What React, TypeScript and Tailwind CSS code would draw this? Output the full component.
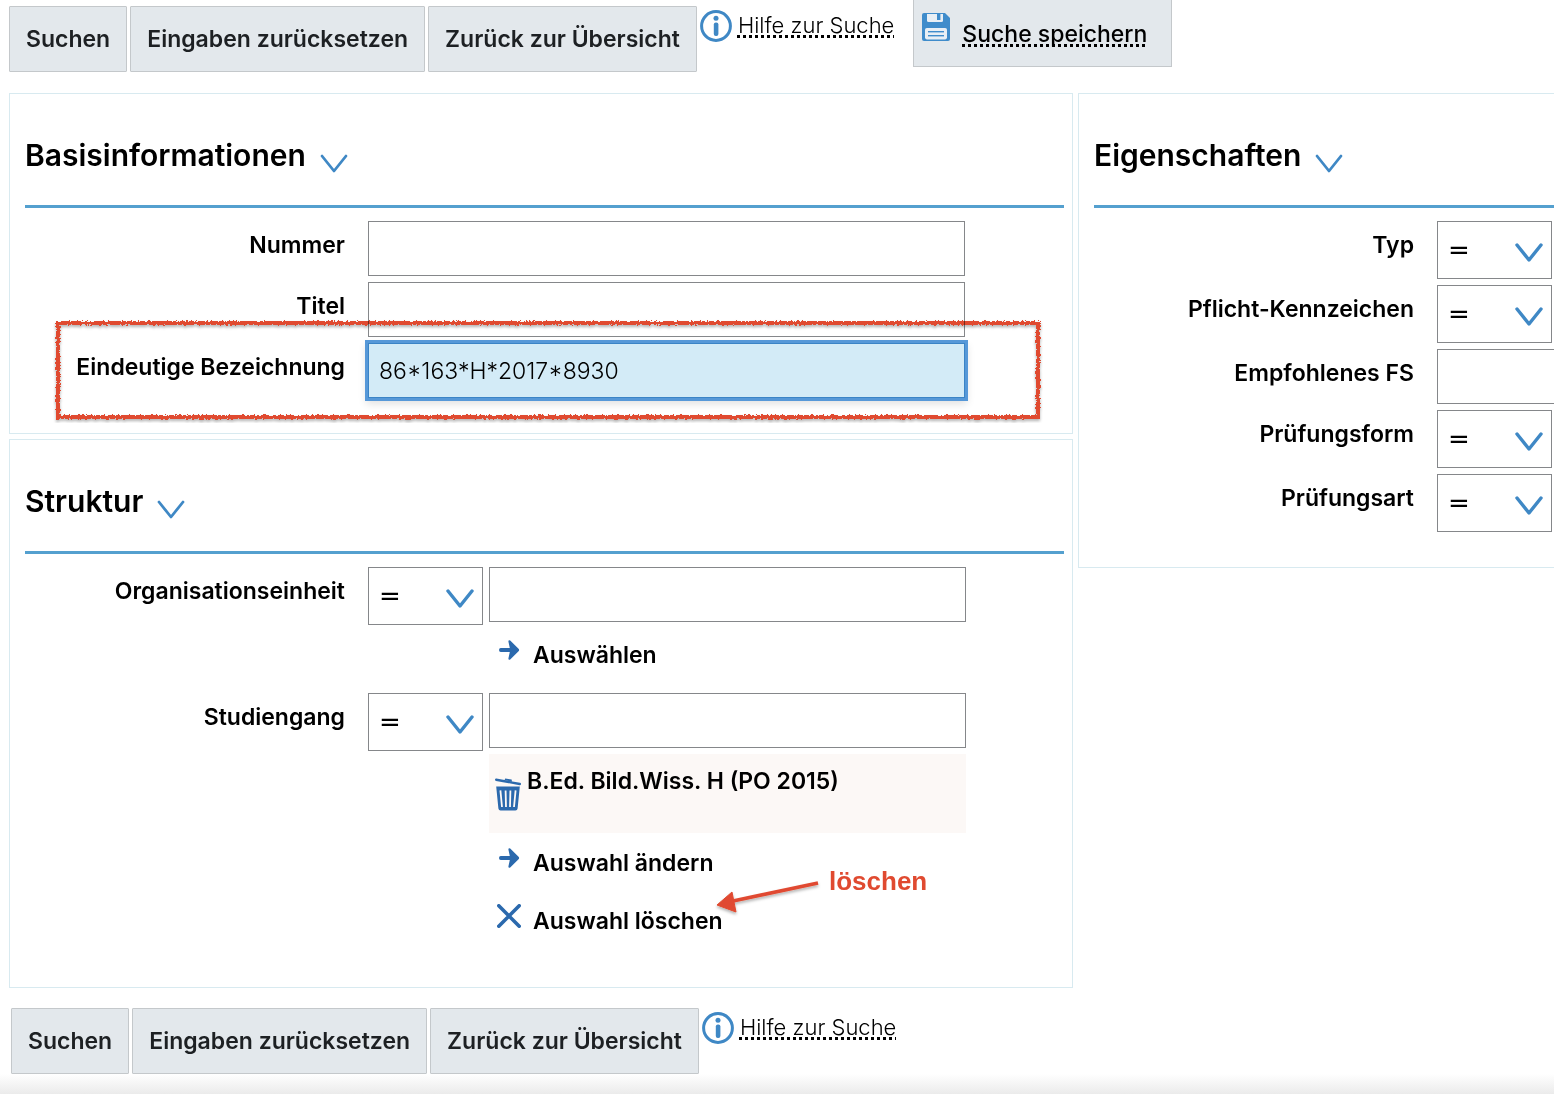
import React from 'react';

const ChevronIcon = ({ className = '', thin = false }: { className?: string; thin?: boolean }) => (
  <svg viewBox="0 0 28 20" fill="none" className={className} aria-hidden="true">
    <path
      d="M2 2 L14 17 L26 2"
      stroke="#3f88c5"
      strokeWidth={thin ? 2.8 : 3.4}
      strokeLinecap="round"
      strokeLinejoin="round"
    />
  </svg>
);

const InfoIcon = () => (
  <svg viewBox="0 0 32 32" className="h-8 w-8 shrink-0" aria-hidden="true">
    <circle cx="16" cy="16" r="14.4" fill="none" stroke="#3f88c5" strokeWidth="3" />
    <circle cx="16" cy="8.2" r="2.5" fill="#3f88c5" />
    <rect x="13.8" y="12.4" width="4.6" height="13.6" rx="2" fill="#3f88c5" />
  </svg>
);

const SaveIcon = () => (
  <svg viewBox="0 0 28 28" className="mt-[13px] h-7 w-7 shrink-0" aria-hidden="true">
    <path d="M2 0 H23 L28 5 V26 Q28 28 26 28 H2 Q0 28 0 26 V2 Q0 0 2 0 Z" fill="#3f8ccb" />
    <path d="M5 1 H21 V7.5 Q21 9 19.5 9 H6.5 Q5 9 5 7.5 Z" fill="#e8eff5" />
    <rect x="15" y="1" width="3.4" height="6" fill="#3f8ccb" />
    <rect x="3" y="15" width="22" height="11.4" rx="1.8" fill="#e8eff5" />
    <rect x="6" y="18" width="16" height="1.4" fill="#3f8ccb" />
    <rect x="6" y="22" width="16" height="1.4" fill="#3f8ccb" />
  </svg>
);

const ArrowIcon = () => (
  <svg viewBox="0 0 22 22" className="h-[22px] w-[22px] shrink-0" aria-hidden="true">
    <path
      d="M2.8 9 H11.8 L10.4 2.4 Q10.4 .6 12.2 1.4 L20.8 10 Q21.4 11 20.8 12 L12.2 20.6 Q10.4 21.4 10.4 19.6 L11.8 13 H2.8 Q1 13 1 11 Q1 9 2.8 9 Z"
      fill="#2b69ad"
    />
  </svg>
);

const CrossIcon = () => (
  <svg viewBox="0 0 24 24" className="h-6 w-6 shrink-0" aria-hidden="true">
    <path d="M1.8 1.8 L22.2 22.2 M22.2 1.8 L1.8 22.2" stroke="#2b69ad" strokeWidth="3.6" strokeLinecap="round" />
  </svg>
);

const TrashIcon = () => (
  <svg viewBox="0 0 26 33" className="h-[33px] w-[26px]" aria-hidden="true">
    <path d="M1.2 1.8 L24.8 6" stroke="#2b69ad" strokeWidth="2.4" strokeLinecap="round" />
    <path d="M9.5 2.2 L10.2 .6 L16.6 1.6 L17 3.8 Z" fill="#2b69ad" />
    <path d="M1.2 8.6 H24.8 L22.6 30.4 Q22.4 32.4 20.4 32.4 H5.6 Q3.6 32.4 3.4 30.4 Z" fill="#2b69ad" />
    <path d="M5.4 12.4 L7 29 M10.6 12.4 L11 29 M15.4 12.4 L15 29 M20.6 12.4 L19 29" stroke="#fcf8f6" strokeWidth="1.8" />
  </svg>
);

const buttonClass =
  'mt-[6px] h-[66px] rounded-[1px] border border-[#c4c8cb] bg-[#e3e8ec] px-4 text-[23px] font-semibold text-[#1d2023]';

const dottedClass = 'underline decoration-dotted decoration-3 underline-offset-2 [text-decoration-skip-ink:none]';

const Toolbar = ({ withSave = false }: { withSave?: boolean }) => (
  <div className="flex flex-wrap items-start gap-[3px]">
    <button type="button" className={buttonClass}>Suchen</button>
    <button type="button" className={buttonClass}>Eingaben zurücksetzen</button>
    <button type="button" className={buttonClass}>Zurück zur Übersicht</button>
    <a href="#hilfe" className="mt-[10px] flex gap-[6px] text-[22px] leading-[30px] font-light">
      <InfoIcon />
      <span className={dottedClass}>Hilfe zur Suche</span>
    </a>
    {withSave && (
      <div className="ml-4 flex h-[67px] gap-3 border border-t-0 border-[#c4c8cb] bg-[#e3e8ec] pr-6 pl-2">
        <SaveIcon />
        <a href="#speichern" className={`mt-[19px] text-[23px] leading-[30px] font-medium ${dottedClass}`}>
          Suche speichern
        </a>
      </div>
    )}
  </div>
);

const Panel = ({
  title,
  className = '',
  children,
}: {
  title: string;
  className?: string;
  children: React.ReactNode;
}) => (
  <section className={`border border-[#d8eaf0] pl-[15px] ${className}`}>
    <h2 className="flex h-[114px] gap-[14px] border-b-[3px] border-[#54a0cf] pt-[41px] text-[30px] leading-10 font-semibold">
      {title}
      <ChevronIcon thin className="mt-[19px] h-5 w-7" />
    </h2>
    <div className="flex flex-col gap-[6px] pt-[13px]">{children}</div>
  </section>
);

const Row = ({ label, htmlFor, children }: { label: string; htmlFor: string; children: React.ReactNode }) => (
  <div className="relative grid grid-cols-[320px_minmax(0,1fr)] gap-[23px]">
    <label htmlFor={htmlFor} className="pt-[9px] text-right text-[23px] leading-[30px] font-semibold">
      {label}
    </label>
    {children}
  </div>
);

const inputClass = 'h-[55px] w-full min-w-0 border border-[#85878a] bg-white px-[10px] text-[23px] font-light outline-none';

const OperatorSelect = ({ id, label }: { id: string; label?: string }) => (
  <div className="relative h-[58px] w-[115px] shrink-0">
    <select
      id={id}
      aria-label={label}
      className="h-full w-full appearance-none border border-[#85878a] bg-white pl-[10px] font-['DejaVu_Sans',sans-serif] text-[26px] outline-none"
    >
      <option>=</option>
    </select>
    <ChevronIcon className="pointer-events-none absolute top-[22px] right-[9px] h-5 w-7" />
  </div>
);

// hand-drawn frame around the highlighted row
const MarkerFrame = () => (
  <svg className="pointer-events-none absolute -top-[24px] left-[28px] h-[104px] w-[990px] mix-blend-multiply" aria-hidden="true">
    <filter id="rough" x="-2%" y="-10%" width="104%" height="125%" colorInterpolationFilters="sRGB">
      <feTurbulence type="fractalNoise" baseFrequency="0.45" numOctaves="3" result="noise" />
      <feDisplacementMap in="SourceGraphic" in2="noise" scale="4" xChannelSelector="R" yChannelSelector="G" result="line" />
      <feDropShadow in="line" dx="0" dy="2" stdDeviation="1.5" floodColor="#000" floodOpacity="0.3" />
    </filter>
    <rect x="5" y="4" width="980" height="94" fill="none" stroke="#e04a30" strokeWidth="4" filter="url(#rough)" />
  </svg>
);

const MarkerArrow = () => (
  <svg viewBox="0 0 108 44" className="mt-[9px] h-11 w-[108px]" aria-hidden="true">
    <filter id="arrow-shadow" x="-10%" y="-20%" width="120%" height="160%">
      <feDropShadow dx="0" dy="2" stdDeviation="1.5" floodColor="#000" floodOpacity="0.3" />
    </filter>
    <g filter="url(#arrow-shadow)">
      <path d="M103 8 L18 26" stroke="#e04a30" strokeWidth="3.8" />
      <path d="M2 30 L17 17 L21 37 Z" fill="#e04a30" stroke="#e04a30" strokeLinejoin="round" />
    </g>
  </svg>
);

const ActionLink = ({ icon, children }: { icon: React.ReactNode; children: string }) => (
  <a href="#auswahl" className="flex h-[58px] gap-3 pl-2 text-[23px] leading-[30px] font-semibold">
    <span className="mt-[3px] flex h-6 w-6 items-center justify-center">{icon}</span>
    <span className="mt-[5px]">{children}</span>
  </a>
);

const App: React.FC = () => {
  return (
    <div className="flex min-h-screen flex-col overflow-x-hidden bg-white font-['Inter','Liberation_Sans',sans-serif] text-black">
      <div className="pl-[9px]">
        <Toolbar withSave />
      </div>

      <main className="mt-[21px] grid grid-cols-[38fr_17fr] items-start gap-[5px] pl-[9px]">
        <div className="flex min-w-0 flex-col gap-[5px]">
          <Panel title="Basisinformationen" className="pr-2 pb-[35px]">
            <div className="flex flex-col gap-[6px] pr-[99px]">
              <Row label="Nummer" htmlFor="nummer">
                <input id="nummer" type="text" className={inputClass} />
              </Row>
              <Row label="Titel" htmlFor="titel">
                <input id="titel" type="text" className={inputClass} />
              </Row>
              <Row label="Eindeutige Bezeichnung" htmlFor="bezeichnung">
                <input
                  id="bezeichnung"
                  type="text"
                  defaultValue="86*163*H*2017*8930"
                  className="h-[55px] w-full min-w-0 border border-[#3b84c6] bg-[#d3ebf7] px-[10px] text-[23px] font-light shadow-[0_4px_8px_2px_rgba(0,0,0,0.12)] ring-3 ring-[#5698d8] outline-none"
                />
                <MarkerFrame />
              </Row>
            </div>
          </Panel>

          <Panel title="Struktur" className="pr-2 pb-7">
            <div className="flex flex-col pr-[98px]">
              <Row label="Organisationseinheit" htmlFor="einheit">
                <div className="flex gap-[6px]">
                  <OperatorSelect id="einheit-op" label="Operator Organisationseinheit" />
                  <div className="min-w-0 flex-1">
                    <input id="einheit" type="text" className={inputClass} />
                    <div className="pt-[13px]">
                      <ActionLink icon={<ArrowIcon />}>Auswählen</ActionLink>
                    </div>
                  </div>
                </div>
              </Row>
              <Row label="Studiengang" htmlFor="studiengang">
                <div className="flex gap-[6px]">
                  <OperatorSelect id="studiengang-op" label="Operator Studiengang" />
                  <div className="min-w-0 flex-1">
                    <input id="studiengang" type="text" className={inputClass} />
                    <div className="mt-[6px] flex h-[79px] gap-[6px] bg-[#fcf8f6] pl-[6px]">
                      <button type="button" aria-label="Entfernen" className="mt-6 h-[33px]">
                        <TrashIcon />
                      </button>
                      <span className="mt-3 text-[23px] leading-[30px] font-semibold">B.Ed. Bild.Wiss. H (PO 2015)</span>
                    </div>
                    <div className="relative pt-[10px]">
                      <ActionLink icon={<ArrowIcon />}>Auswahl ändern</ActionLink>
                      <ActionLink icon={<CrossIcon />}>Auswahl löschen</ActionLink>
                      <div className="absolute top-[33px] left-[226px] flex gap-[6px] font-['Liberation_Sans',Arial,sans-serif] text-[26px] leading-[30px] font-bold text-[#e04a30]">
                        <MarkerArrow />
                        löschen
                      </div>
                    </div>
                  </div>
                </div>
              </Row>
            </div>
          </Panel>
        </div>

        <Panel title="Eigenschaften" className="min-w-0 border-r-0 pb-[35px]">
          <Row label="Typ" htmlFor="typ">
            <OperatorSelect id="typ" />
          </Row>
          <Row label="Pflicht-Kennzeichen" htmlFor="pflicht">
            <OperatorSelect id="pflicht" />
          </Row>
          <Row label="Empfohlenes FS" htmlFor="fs">
            <input id="fs" type="text" className={`${inputClass} border-r-0`} />
          </Row>
          <Row label="Prüfungsform" htmlFor="form">
            <OperatorSelect id="form" />
          </Row>
          <Row label="Prüfungsart" htmlFor="art">
            <OperatorSelect id="art" />
          </Row>
        </Panel>
      </main>

      <div className="mt-[14px] pl-[11px]">
        <Toolbar />
      </div>
      <div className="mt-auto h-5 bg-linear-to-b from-white to-[#ebebeb]" />
    </div>
  );
};

export default App;
